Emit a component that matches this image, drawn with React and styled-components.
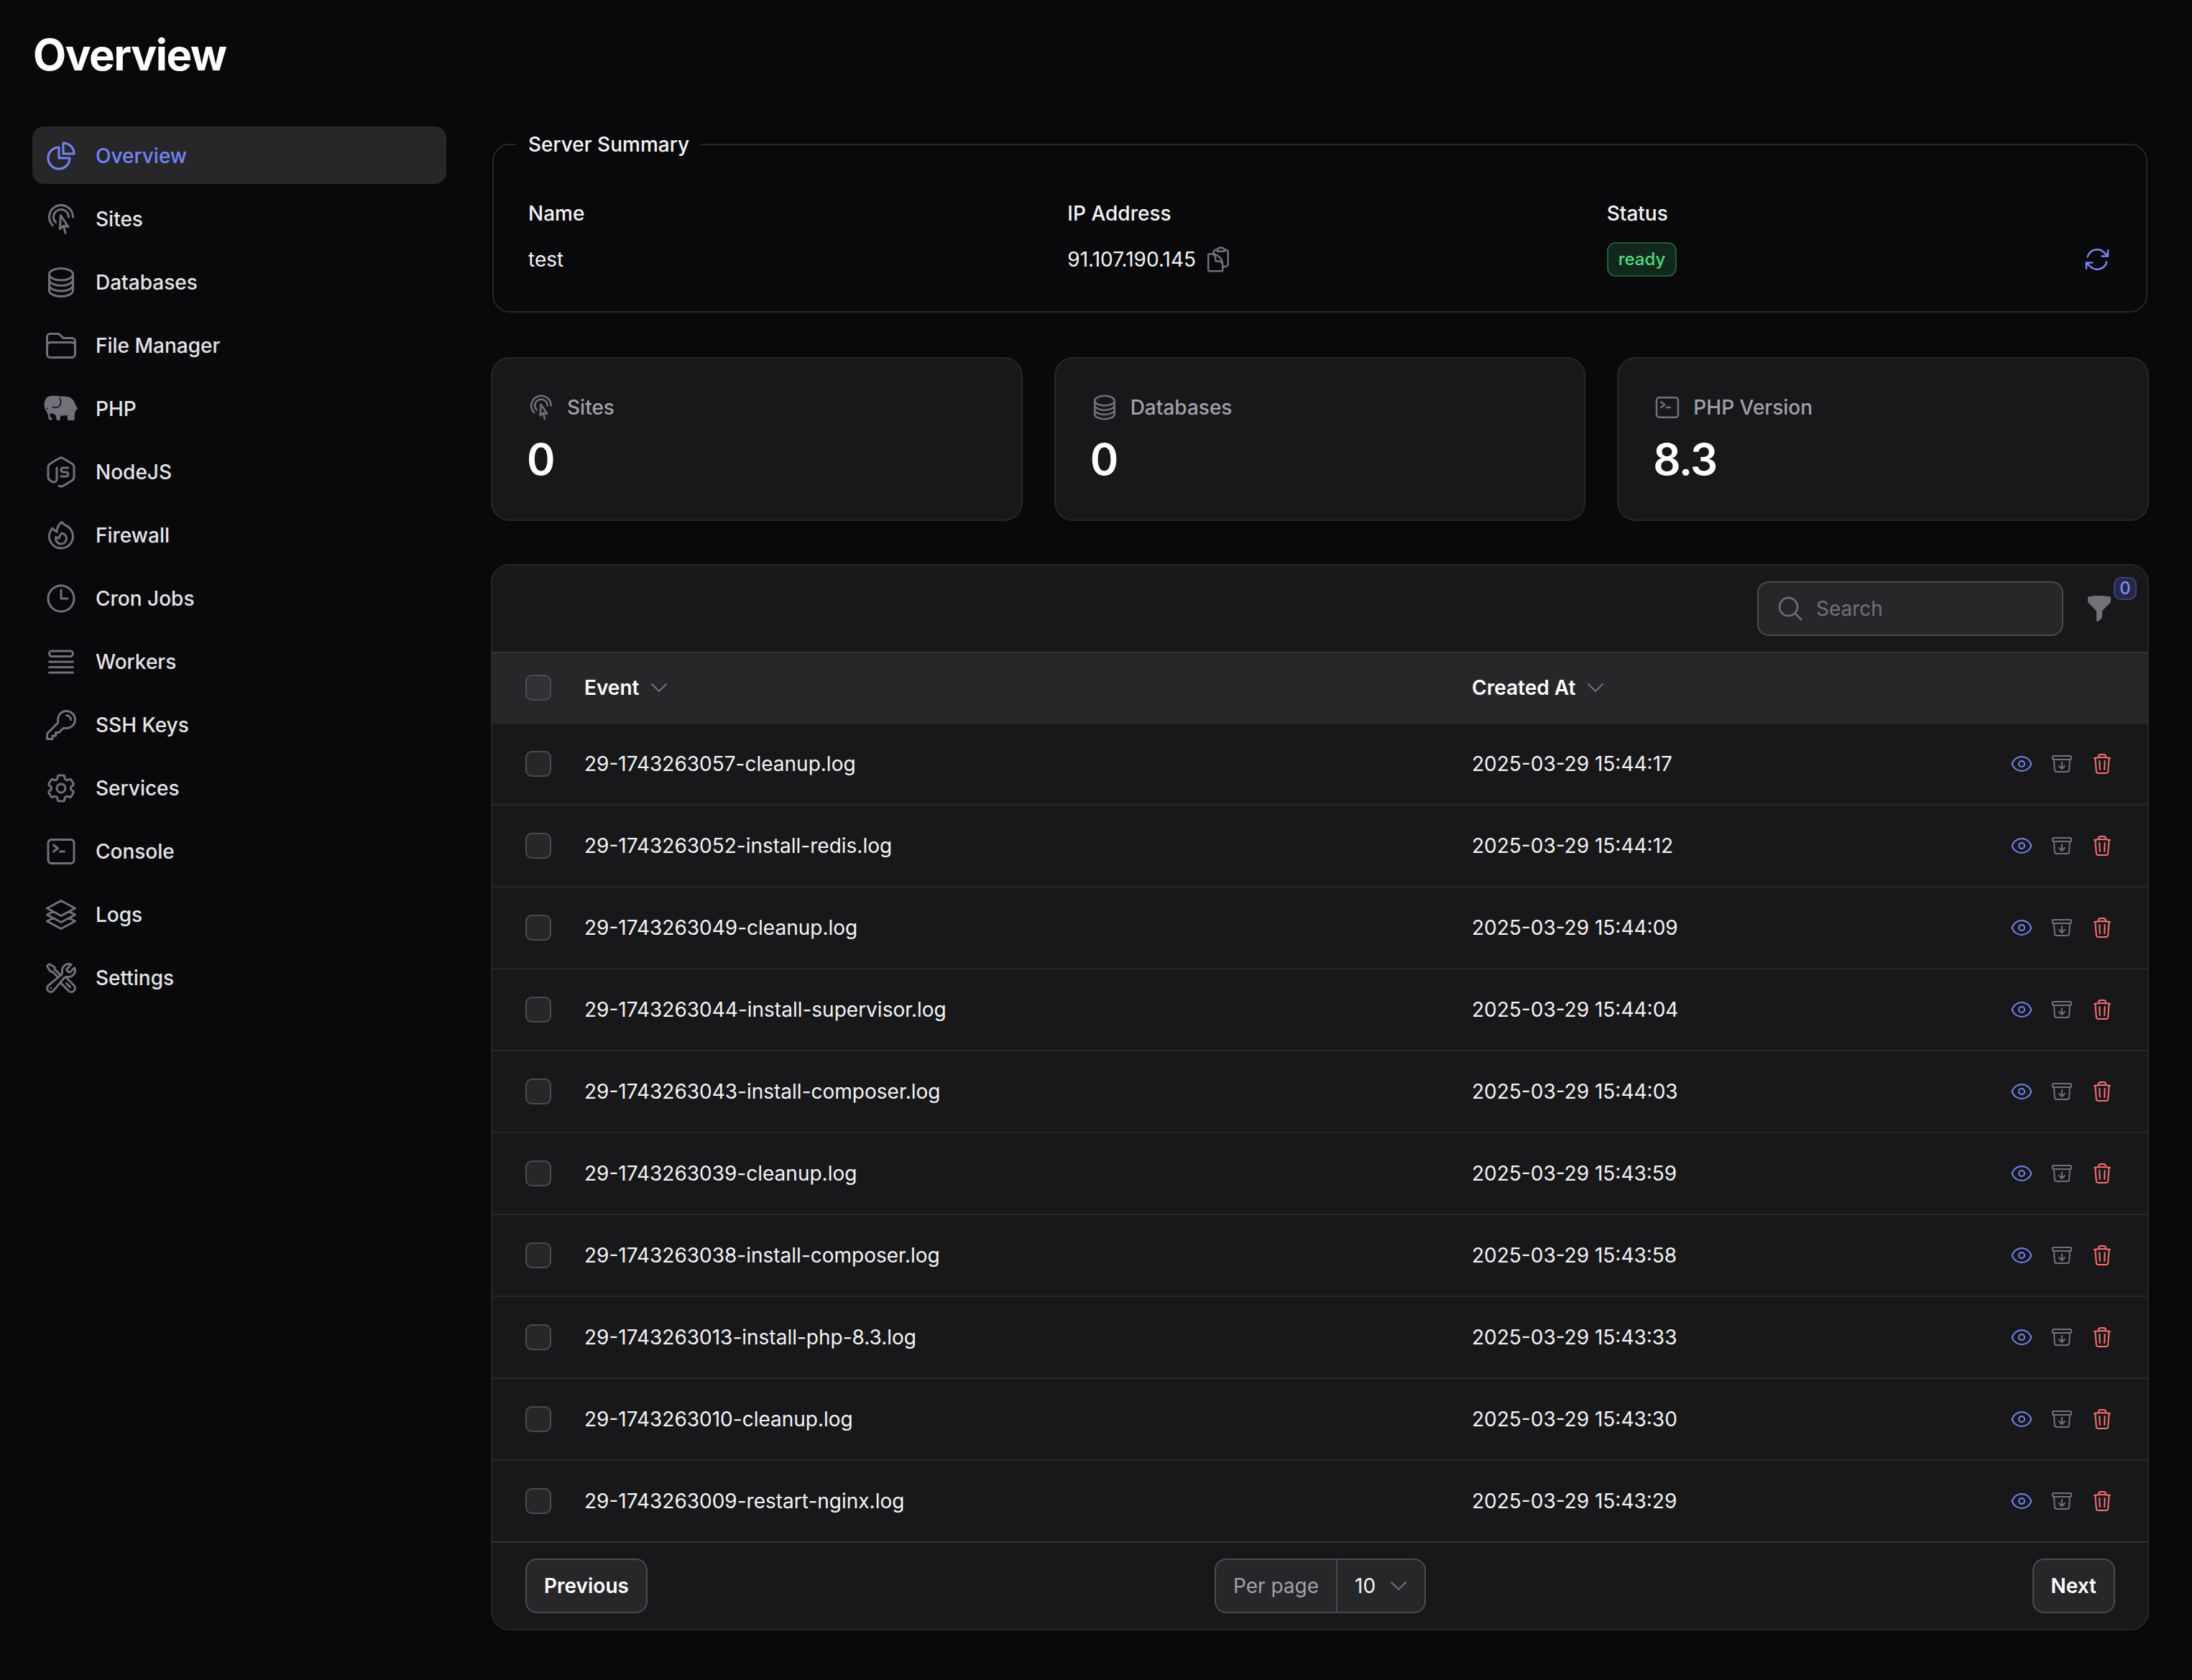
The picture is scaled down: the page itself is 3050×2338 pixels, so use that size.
import React from "react";
import styled, { createGlobalStyle } from "styled-components";
import {
  HiOutlineChartPie,
  HiOutlineCursorArrowRipple,
  HiOutlineCircleStack,
  HiOutlineFolder,
  HiOutlineFire,
  HiOutlineClock,
  HiOutlineQueueList,
  HiOutlineKey,
  HiOutlineCog6Tooth,
  HiOutlineCommandLine,
  HiOutlineSquare3Stack3D,
  HiOutlineWrenchScrewdriver,
  HiOutlineEye,
  HiOutlineArchiveBoxArrowDown,
  HiOutlineTrash,
  HiOutlineMagnifyingGlass,
  HiOutlineClipboardDocument,
  HiOutlineArrowPath,
  HiOutlineChevronDown,
} from "react-icons/hi2";
import { TbBrandNodejs } from "react-icons/tb";

const GlobalStyle = createGlobalStyle`
  html, body {
    margin: 0;
    background: #09090b;
  }

  body {
    font-family: Inter, "Liberation Sans", sans-serif;
    font-size: 28px;
    line-height: 40px;
    color: #f4f4f5;
  }

  * {
    box-sizing: border-box;
  }
`;

const Page = styled.div`
  padding: 40px 62px 72px 45px;
`;

const Title = styled.h1`
  margin: 0 0 64px 1px;
  font-size: 60px;
  line-height: 72px;
  font-weight: 700;
  letter-spacing: -0.025em;
  color: #fff;
`;

const Body = styled.div`
  display: flex;
  align-items: flex-start;
  gap: 64px;
`;

const Sidebar = styled.nav`
  display: flex;
  flex-direction: column;
  gap: 8px;
  width: 576px;
  flex-shrink: 0;
`;

const NavItem = styled.a`
  display: flex;
  align-items: center;
  gap: 24px;
  height: 80px;
  padding: 2px 16px 0;
  border-radius: 16px;
  font-weight: 500;
  background: ${(props) => (props.$active ? "#27272a" : "transparent")};
  color: ${(props) => (props.$active ? "#7584f5" : "#e4e4e7")};

  svg {
    flex-shrink: 0;
    color: ${(props) => (props.$active ? "#7584f5" : "#71717a")};
  }
`;

const Main = styled.main`
  flex: 1;
  min-width: 0;
  display: flex;
  flex-direction: column;
  gap: 64px;
  margin-top: 5px;
`;

const Summary = styled.fieldset`
  margin: 0;
  padding: 56px 48px 48px;
  border: 2px solid #27272a;
  border-radius: 24px;
  min-width: 0;
`;

const Legend = styled.legend`
  margin-left: -16px;
  padding: 0 16px;
  font-weight: 500;
`;

const SummaryGrid = styled.div`
  display: grid;
  grid-template-columns: repeat(3, 1fr);
  grid-template-rows: 40px 48px;
  column-gap: 48px;
  row-gap: 20px;
  align-items: center;
`;

const SummaryLabel = styled.div`
  font-weight: 500;
`;

const IpValue = styled.div`
  display: flex;
  align-items: center;
  gap: 11px;

  svg {
    color: #71717a;
  }
`;

const StatusCell = styled.div`
  display: flex;
  align-items: center;
  justify-content: space-between;

  svg {
    color: #7584f5;
  }
`;

const StatusPill = styled.span`
  display: inline-flex;
  align-items: center;
  height: 48px;
  padding: 0 14px;
  border: 2px solid #1f5b37;
  border-radius: 12px;
  background: #13281c;
  color: #4ade80;
  font-size: 24px;
  font-weight: 500;
`;

const Stats = styled.div`
  display: grid;
  grid-template-columns: repeat(3, 1fr);
  gap: 48px;
`;

const StatCard = styled.div`
  height: 224px;
  padding: 48px;
  border-radius: 24px;
  background: #18181b;
  box-shadow: 0 0 0 2px #27272a;
`;

const StatLabel = styled.div`
  display: flex;
  align-items: center;
  gap: 16px;
  font-weight: 500;
  color: #a1a1aa;

  svg {
    color: #71717a;
  }
`;

const StatValue = styled.div`
  margin-top: 16px;
  font-size: 60px;
  line-height: 72px;
  font-weight: 600;
  letter-spacing: -0.025em;
  color: #fff;
`;

const TableCard = styled.section`
  border-radius: 24px;
  background: #18181b;
  box-shadow: 0 0 0 2px #27272a;
  overflow: hidden;
`;

const Toolbar = styled.div`
  display: flex;
  align-items: center;
  justify-content: flex-end;
  gap: 30px;
  height: 122px;
  padding-right: 47px;
  border-bottom: 2px solid #323236;
`;

const SearchBox = styled.label`
  display: flex;
  align-items: center;
  gap: 14px;
  width: 426px;
  height: 76px;
  padding: 0 24px;
  border: 2px solid #4a4a4f;
  border-radius: 16px;
  background: #27272a;

  svg {
    flex-shrink: 0;
    color: #71717a;
  }
`;

const SearchInput = styled.input`
  flex: 1;
  min-width: 0;
  border: 0;
  outline: 0;
  background: transparent;
  font: inherit;
  color: #f4f4f5;

  &::placeholder {
    color: #71717a;
  }
`;

const FilterButton = styled.div`
  position: relative;
  display: flex;
  width: 40px;
  height: 40px;
  color: #71717a;
`;

const FilterBadge = styled.span`
  position: absolute;
  top: -24px;
  left: 40px;
  display: flex;
  align-items: center;
  justify-content: center;
  width: 32px;
  height: 32px;
  border: 2px solid #3a4178;
  border-radius: 10px;
  background: #252947;
  color: #7f8ef8;
  font-size: 24px;
  line-height: 1;
  font-weight: 500;
`;

const Row = styled.div`
  display: grid;
  grid-template-columns: 82px 1235px 1fr auto;
  align-items: center;
  height: ${(props) => (props.$head ? "98px" : "114px")};
  padding: 0 47px 0 46px;
  border-bottom: 2px solid ${(props) => (props.$last ? "#323236" : "#27272a")};
  background: ${(props) => (props.$head ? "#27272a" : "transparent")};
`;

const CheckBox = styled.input.attrs({ type: "checkbox" })`
  appearance: none;
  display: block;
  width: 36px;
  height: 36px;
  margin: 0;
  border: 2px solid #4a4a4f;
  border-radius: 9px;
  background: ${(props) => (props.$head ? "#323236" : "#27272a")};
`;

const HeadCell = styled.div`
  display: flex;
  align-items: center;
  gap: 12px;
  font-weight: 600;
  color: #fff;

  svg {
    color: #71717a;
  }
`;

const Actions = styled.div`
  display: flex;
  align-items: center;
  gap: 24px;
`;

const ActionIcon = styled.span`
  display: flex;
  color: ${(props) => props.$color};
`;

const Footer = styled.div`
  display: grid;
  grid-template-columns: 1fr auto 1fr;
  align-items: center;
  height: 120px;
  padding: 0 45px 0 46px;
`;

const PagerButton = styled.button`
  justify-self: ${(props) => (props.$end ? "end" : "start")};
  height: 76px;
  padding: 0 24px;
  border: 2px solid #4a4a4f;
  border-radius: 16px;
  background: #27272a;
  font: inherit;
  font-weight: 600;
  color: #fff;
`;

const PerPage = styled.div`
  display: flex;
  align-items: center;
  height: 76px;
  border: 2px solid #4a4a4f;
  border-radius: 16px;
  background: #27272a;
`;

const PerPageLabel = styled.span`
  display: flex;
  align-items: center;
  height: 100%;
  padding: 0 24px;
  border-right: 2px solid #4a4a4f;
  color: #a1a1aa;
`;

const PerPageValue = styled.span`
  display: flex;
  align-items: center;
  gap: 16px;
  padding: 0 20px 0 24px;
  color: #f4f4f5;

  svg {
    color: #71717a;
  }
`;

// the filled elephant next to PHP, no icon package has this one
const ElephantIcon = () => (
  <svg width="48" height="48" viewBox="0 0 48 48" fill="currentColor">
    <path d="M10.7 6C7 6 5 7 4 8.3 2 11 .7 14 .7 16.7c0 2.3.1 4.8.6 6.6.7 2.2 2 3.200 2.700 5 1 2.200 1.300 3.700 2 5 .3 2.200.5 4.700 1.300 6 1.200.7 2.700.5 3.400 0 1-.5 1.600-1.300 1.600-2-1.300-.5-2.800-1-3.300-2.300-.5-1.500-.5-3.500-.3-5 1.300.5 3.100.8 4.600.7 1.200.8 2.500 1.600 3.400 2.600L18 40h4.300l1-6.700c2.700.5 6.200.2 9-.6l1 7.300h9l1-11.700c1.200-1.300 2.700-3.800 4-5-1.300-1.300-2.500-2.800-3.300-5-1-2.800-1.500-4.800-3.300-6.600-2.200-2.400-4.200-3.900-6.700-4.400-3.500-.8-7-1-10-.6-2 .1-3.500-.4-5-.7-3-.5-6-.2-8.300 0Z" />
    <path
      d="M22.3 9.300c1.400 2.400 1.800 5.200 1 7.400-.9 3-2.600 4.500-4.300 5-2.300.7-4.700.3-6.700-.2"
      fill="none"
      stroke="#09090b"
      strokeWidth="1.4"
      strokeLinecap="round"
    />
    <circle cx="4.500" cy="23.500" r="1" fill="#09090b" />
  </svg>
);

// heroicons 20px solid funnel, the 24px one in react-icons has another outline
const FunnelIcon = () => (
  <svg width="40" height="40" viewBox="0 0 20 20" fill="currentColor">
    <path d="M2.628 1.601C5.028 1.206 7.49 1 10 1s4.973.206 7.372.601a.75.75 0 0 1 .628.74v2.288a2.25 2.25 0 0 1-.659 1.59l-4.682 4.683a2.25 2.25 0 0 0-.659 1.59v3.037c0 .684-.31 1.33-.844 1.757l-1.937 1.55A.75.75 0 0 1 8 18.25v-5.757a2.25 2.25 0 0 0-.659-1.591L2.659 6.22A2.25 2.25 0 0 1 2 4.629V2.34a.75.75 0 0 1 .628-.74Z" />
  </svg>
);

const navItems = [
  { label: "Overview", icon: HiOutlineChartPie, active: true },
  { label: "Sites", icon: HiOutlineCursorArrowRipple },
  { label: "Databases", icon: HiOutlineCircleStack },
  { label: "File Manager", icon: HiOutlineFolder },
  { label: "PHP", icon: ElephantIcon },
  { label: "NodeJS", icon: TbBrandNodejs, thin: true },
  { label: "Firewall", icon: HiOutlineFire },
  { label: "Cron Jobs", icon: HiOutlineClock },
  { label: "Workers", icon: HiOutlineQueueList },
  { label: "SSH Keys", icon: HiOutlineKey },
  { label: "Services", icon: HiOutlineCog6Tooth },
  { label: "Console", icon: HiOutlineCommandLine },
  { label: "Logs", icon: HiOutlineSquare3Stack3D },
  { label: "Settings", icon: HiOutlineWrenchScrewdriver },
];

const stats = [
  { label: "Sites", value: "0", icon: HiOutlineCursorArrowRipple },
  { label: "Databases", value: "0", icon: HiOutlineCircleStack },
  { label: "PHP Version", value: "8.3", icon: HiOutlineCommandLine },
];

const logs = [
  ["29-1743263057-cleanup.log", "2025-03-29 15:44:17"],
  ["29-1743263052-install-redis.log", "2025-03-29 15:44:12"],
  ["29-1743263049-cleanup.log", "2025-03-29 15:44:09"],
  ["29-1743263044-install-supervisor.log", "2025-03-29 15:44:04"],
  ["29-1743263043-install-composer.log", "2025-03-29 15:44:03"],
  ["29-1743263039-cleanup.log", "2025-03-29 15:43:59"],
  ["29-1743263038-install-composer.log", "2025-03-29 15:43:58"],
  ["29-1743263013-install-php-8.3.log", "2025-03-29 15:43:33"],
  ["29-1743263010-cleanup.log", "2025-03-29 15:43:30"],
  ["29-1743263009-restart-nginx.log", "2025-03-29 15:43:29"],
];

export default function App() {
  return (
    <Page>
      <GlobalStyle />
      <Title>Overview</Title>
      <Body>
        <Sidebar>
          {navItems.map((item) => {
            const Icon = item.icon;
            return (
              <NavItem key={item.label} $active={item.active}>
                <Icon size={48} {...(item.thin ? { strokeWidth: 1.5 } : {})} />
                {item.label}
              </NavItem>
            );
          })}
        </Sidebar>

        <Main>
          <Summary>
            <Legend>Server Summary</Legend>
            <SummaryGrid>
              <SummaryLabel>Name</SummaryLabel>
              <SummaryLabel>IP Address</SummaryLabel>
              <SummaryLabel>Status</SummaryLabel>
              <div>test</div>
              <IpValue>
                91.107.190.145
                <HiOutlineClipboardDocument size={40} />
              </IpValue>
              <StatusCell>
                <StatusPill>ready</StatusPill>
                <HiOutlineArrowPath size={40} />
              </StatusCell>
            </SummaryGrid>
          </Summary>

          <Stats>
            {stats.map((stat) => {
              const Icon = stat.icon;
              return (
                <StatCard key={stat.label}>
                  <StatLabel>
                    <Icon size={40} />
                    {stat.label}
                  </StatLabel>
                  <StatValue>{stat.value}</StatValue>
                </StatCard>
              );
            })}
          </Stats>

          <TableCard>
            <Toolbar>
              <SearchBox>
                <HiOutlineMagnifyingGlass size={40} />
                <SearchInput placeholder="Search" />
              </SearchBox>
              <FilterButton>
                <FunnelIcon />
                <FilterBadge>0</FilterBadge>
              </FilterButton>
            </Toolbar>

            <Row $head>
              <CheckBox $head />
              <HeadCell>
                Event
                <HiOutlineChevronDown size={32} />
              </HeadCell>
              <HeadCell>
                Created At
                <HiOutlineChevronDown size={32} />
              </HeadCell>
            </Row>

            {logs.map(([event, createdAt], index) => (
              <Row key={event} $last={index === logs.length - 1}>
                <CheckBox />
                <div>{event}</div>
                <div>{createdAt}</div>
                <Actions>
                  <ActionIcon $color="#7584f5">
                    <HiOutlineEye size={32} />
                  </ActionIcon>
                  <ActionIcon $color="#71717a">
                    <HiOutlineArchiveBoxArrowDown size={32} />
                  </ActionIcon>
                  <ActionIcon $color="#f87171">
                    <HiOutlineTrash size={32} />
                  </ActionIcon>
                </Actions>
              </Row>
            ))}

            <Footer>
              <PagerButton>Previous</PagerButton>
              <PerPage>
                <PerPageLabel>Per page</PerPageLabel>
                <PerPageValue>
                  10
                  <HiOutlineChevronDown size={32} />
                </PerPageValue>
              </PerPage>
              <PagerButton $end>Next</PagerButton>
            </Footer>
          </TableCard>
        </Main>
      </Body>
    </Page>
  );
}
